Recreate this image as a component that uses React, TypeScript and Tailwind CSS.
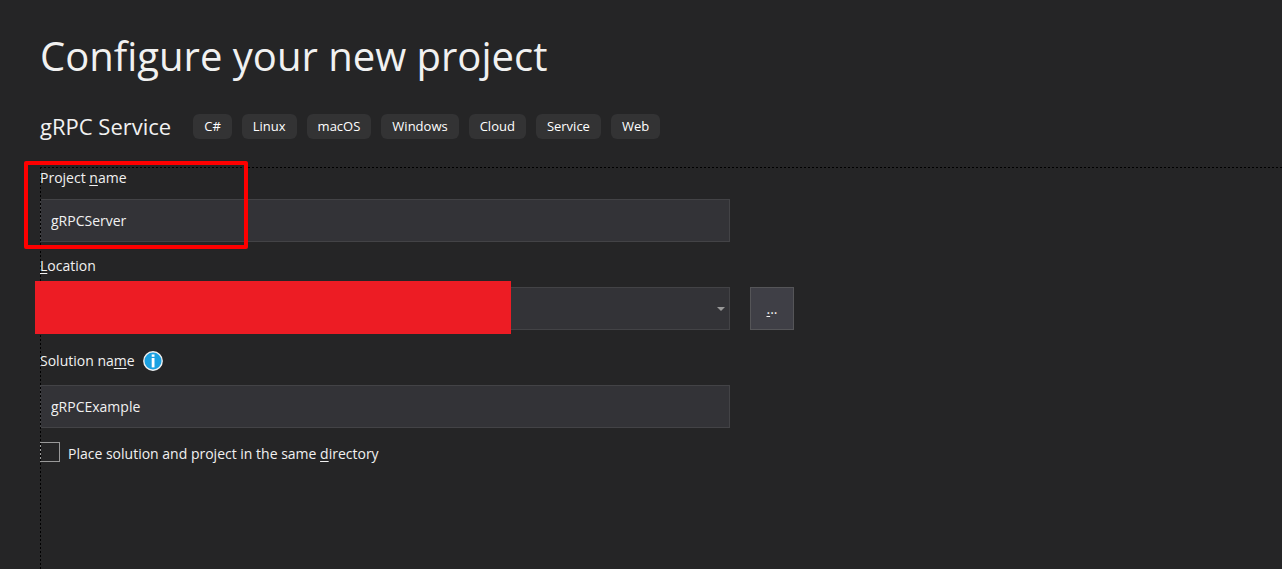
import { ReactNode } from 'react';

const tags = ['C#', 'Linux', 'macOS', 'Windows', 'Cloud', 'Service', 'Web'];

const fieldClass =
  'block h-[43px] w-full appearance-none rounded-none border border-[#434346] bg-[#333337] px-2.5 text-sm text-[#f1f1f1] outline-none';

function Key({ children }: { children: ReactNode }) {
  return <span className="underline decoration-1 underline-offset-2">{children}</span>;
}

function InfoIcon() {
  return (
    <svg className="h-5 w-5" viewBox="0 0 20 20" aria-hidden="true">
      <circle cx="10" cy="10" r="9.2" fill="#1ba1e2" stroke="#f1f1f1" strokeWidth="1.4" />
      <rect x="8.7" y="3.4" width="2.8" height="2.4" fill="#fff" />
      <rect x="8.7" y="7" width="2.8" height="9.4" fill="#fff" />
    </svg>
  );
}

export default function App() {
  return (
    <main className="flex min-h-screen flex-col overflow-hidden bg-[#252526] pl-10 font-['Open_Sans',sans-serif] text-sm leading-5 text-[#f1f1f1]">
      <h1 className="pt-7 text-[40px] leading-14">Configure your new project</h1>

      <div className="mt-[26px] flex items-center gap-[22px] pb-[25px]">
        <h2 className="text-[22px] leading-8">gRPC Service</h2>
        <ul className="flex gap-2.5 text-[13px]">
          {tags.map((tag) => (
            <li key={tag} className="h-[25px] rounded-md bg-[#333334] px-[11px] leading-[25px] text-white">
              {tag}
            </li>
          ))}
        </ul>
      </div>

      <form className="relative flex-1 pt-px" onSubmit={(e) => e.preventDefault()}>
        {/* dotted guides along the top and left edges */}
        <div className="pointer-events-none absolute inset-x-0 top-0 z-10 h-px bg-[repeating-linear-gradient(90deg,#000_0_2px,transparent_2px_4px)]" />
        <div className="pointer-events-none absolute inset-y-0 left-0 z-10 w-px bg-[repeating-linear-gradient(180deg,#000_0_2px,transparent_2px_4px)]" />

        <div className="relative max-w-[690px]">
          <label htmlFor="project-name" className="block pb-[11px]">
            Project <Key>n</Key>ame
          </label>
          <input id="project-name" className={fieldClass} defaultValue="gRPCServer" />
          <div className="pointer-events-none absolute -top-[7px] -left-4 z-20 h-[88px] w-[224px] rounded-xs border-4 border-[#fe0000]" />
        </div>

        <label htmlFor="location" className="mt-[14px] block pb-[11px]">
          <Key>L</Key>ocation
        </label>
        <div className="flex gap-5">
          <div className="relative w-full max-w-[690px]">
            <select id="location" className={fieldClass} />
            <svg className="pointer-events-none absolute top-5 right-[5px] h-1 w-2" viewBox="0 0 8 4" aria-hidden="true">
              <path d="M0 0h8L4 4z" fill="#999" />
            </svg>
            <div className="absolute -top-1.5 -left-[5px] z-20 h-[53px] w-[476px] bg-[#ed1c24]" />
          </div>
          <button type="button" aria-label="Browse" className="h-[43px] w-11 shrink-0 border border-[#555558] bg-[#3f3f46]">
            <Key>.</Key>..
          </button>
        </div>

        <div className="mt-[21px] flex items-center gap-2 pb-[14px]">
          <label htmlFor="solution-name">
            Solution na<Key>m</Key>e
          </label>
          <InfoIcon />
        </div>
        <div className="max-w-[690px]">
          <input id="solution-name" className={fieldClass} defaultValue="gRPCExample" />
        </div>

        <div className="mt-[14px] flex gap-2">
          <input id="same-directory" type="checkbox" className="h-5 w-5 appearance-none border border-[#999] bg-[#252526]" />
          <label htmlFor="same-directory" className="pt-0.5">
            Place solution and project in the same <Key>d</Key>irectory
          </label>
        </div>
      </form>
    </main>
  );
}
